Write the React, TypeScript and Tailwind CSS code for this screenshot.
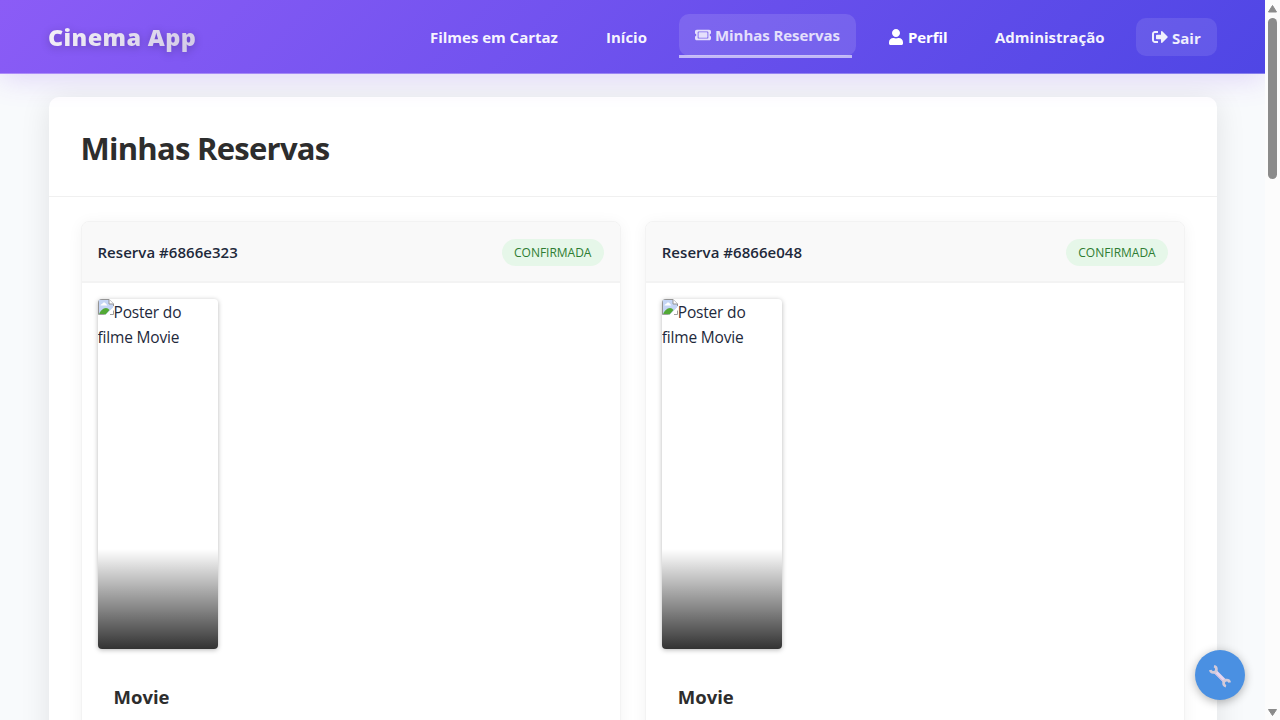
import { FaSignOutAlt, FaUser } from "react-icons/fa";
import { FaTicket } from "react-icons/fa6";

const reservations = [
  { id: "6866e323", title: "Movie" },
  { id: "6866e048", title: "Movie" },
];

function BrokenImageIcon() {
  return (
    <svg width="16" height="16" viewBox="0 0 16 16" className="inline-block align-top">
      <path d="M0.500 15.500V0.500H11L15.500 5V8L8 15.500Z" fill="#c4d5f5" />
      <path d="M2.500 6.500q0-1.700 1.700-1.600Q5 3 6.700 3.600 8 4 8 5.300q1.300 0 1.300 1.200z" fill="#fff" />
      <path d="M1 15.500C2 12 5 9 8 9q2 0 3.500 2L7.500 15.500z" fill="#52a935" />
      <path d="M0.500 15.500V0.500H11L15.500 5V7" fill="none" stroke="#949494" />
      <path d="M11 0.500V5H15.500" fill="#fff" stroke="#949494" />
      <path d="M0.500 15.500H6M12 15.500H15.500V11.500" fill="none" stroke="#a0a0a0" />
      <path d="M8 16L16 8V10.500L10.500 16Z" fill="#fff" />
    </svg>
  );
}

function WrenchIcon() {
  return (
    <svg width="24" height="24" viewBox="0 0 24 24" className="translate-y-px">
      <path d="M7 7.300L17 17.300" stroke="#e6d5ee" strokeWidth="4" />
      <path d="M6.500 8.800L15.500 17.800" stroke="#c9b3d6" strokeWidth="0.900" />
      <g fill="none" stroke="#d3cad9" strokeWidth="2.700">
        <path d="M6 2.300A3.100 3.100 0 1 1 2.300 6" />
        <path d="M18 22.200A3.100 3.100 0 1 1 21.700 18.500" />
      </g>
    </svg>
  );
}

function Header() {
  return (
    <header className="relative z-10 flex h-[74px] shrink-0 items-center justify-between border-b border-white/30 bg-[linear-gradient(135deg,#8b5cf6_0%,#4f46e5_100%)] px-12 shadow-[0_4px_30px_rgba(124,58,237,0.2)]">
      <div className="whitespace-nowrap bg-[linear-gradient(135deg,#f6f4f8,#d1c9e6)] bg-clip-text text-[23.500px] leading-8 font-extrabold tracking-[0.35px] text-transparent drop-shadow-[0_2px_4px_rgba(0,0,0,0.22)]">
        Cinema App
      </div>
      <nav className="flex items-center gap-4 text-[15px] leading-6 font-bold whitespace-nowrap text-white/95">
        <a className="w-40 px-4 tracking-[-0.02px]">Filmes em Cartaz</a>
        <a className="w-[73px] px-4">Início</a>
        <a className="relative -top-0.5 flex h-[42px] w-[177px] items-center gap-1 rounded-[10px] bg-white/12 px-4 text-white/80">
          <FaTicket size={16} />
          <span className="tracking-[-0.06px]">Minhas Reservas</span>
          <span className="absolute -bottom-0.5 left-0 h-[2.500px] w-[173px] bg-white/60" />
        </a>
        <a className="flex w-[91px] items-center gap-[5px] pl-[17px] text-white">
          <FaUser className="w-[14px]" size={16} />
          <span className="tracking-[-0.1px]">Perfil</span>
        </a>
        <a className="w-[141px] px-4">Administração</a>
        <button className="flex h-[38px] w-[81px] items-center gap-1 rounded-[10px] bg-white/10 px-4 text-white/90">
          <FaSignOutAlt size={16} className="shrink-0" />
          <span className="pt-0.5 font-bold">Sair</span>
        </button>
      </nav>
    </header>
  );
}

function ReservationCard({ id, title }: { id: string; title: string }) {
  return (
    <article className="h-[560px] overflow-hidden rounded-lg border border-[#f3f3f3] bg-white shadow-[0_2px_15px_rgba(0,0,0,0.05)]">
      <div className="flex h-[61px] items-center justify-between border-b-2 border-[#f3f3f3] bg-[#f9f9f9] px-4 pt-px">
        <h2 className="text-[15px] leading-6 font-semibold tracking-[0.04px] text-[#1e293b]">Reserva #{id}</h2>
        <span className="flex h-[27px] w-[102px] items-center justify-center rounded-full bg-[#e6f7e9] pt-px text-[12px] font-medium tracking-[-0.02px] text-[#2e7d32]">
          CONFIRMADA
        </span>
      </div>
      <div className="p-4">
        <div className="relative h-[350px] w-[120px] overflow-hidden rounded bg-white text-[15.500px] leading-[25px] text-[#1e293b] shadow-[0_1px_5px_rgba(0,0,0,0.28)]">
          <div className="pt-px tracking-[-0.18px]">
            <span className="-mt-px inline-block align-top leading-none">
              <BrokenImageIcon />
            </span>
            Poster do
            <br />
            filme Movie
          </div>
          <div className="absolute inset-x-0 bottom-0 h-[100px] bg-linear-to-t from-black/80 to-transparent" />
        </div>
        <h3 className="mt-8 pl-4 text-[18.500px] leading-8 font-bold text-[#2d2d2d]">{title}</h3>
      </div>
    </article>
  );
}

function Scrollbar() {
  return (
    <div className="flex w-[15px] shrink-0 flex-col items-center justify-between bg-[#fcfcfc]">
      <div className="flex flex-col items-center">
        <svg width="15" height="18" viewBox="0 0 15 18">
          <path d="M7.500 5.500L11.500 12H3.500Z" fill="#8b8b8b" stroke="#8b8b8b" strokeLinejoin="round" />
        </svg>
        <div className="h-[161px] w-[9px] rounded-full bg-[#8b8b8b]" />
      </div>
      <svg width="15" height="18" viewBox="0 0 15 18">
        <path d="M7.500 13.500L11.500 7.500H3.500Z" fill="#8b8b8b" stroke="#8b8b8b" strokeLinejoin="round" />
      </svg>
    </div>
  );
}

export default function App() {
  return (
    <div className="flex h-[720px] w-[1280px] overflow-hidden font-['Open_Sans','Noto_Sans',sans-serif]">
      <div className="relative flex min-w-0 flex-1 flex-col overflow-hidden bg-[#f8fafc]">
        <Header />
        <main className="mt-[23.400px] mr-12 ml-[48.500px] h-[900px] shrink-0 rounded-[10px] bg-white shadow-[0_5px_30px_rgba(0,0,0,0.1)]">
          <div className="flex h-[100px] items-center border-b border-[#f0f0f0] px-8 pt-0.5">
            <h1 className="text-[31px] leading-10 font-bold tracking-[-0.73px] text-[#2d2d2d]">Minhas Reservas</h1>
          </div>
          <div className="grid grid-cols-2 gap-6 px-8 pt-6">
            {reservations.map((r) => (
              <ReservationCard key={r.id} id={r.id} title={r.title} />
            ))}
          </div>
        </main>
        <button className="absolute right-5 bottom-5 z-20 flex size-[50px] items-center justify-center rounded-full bg-[#4a90e2] shadow-[0_2px_10px_rgba(0,0,0,0.3)]">
          <WrenchIcon />
        </button>
      </div>
      <Scrollbar />
    </div>
  );
}
